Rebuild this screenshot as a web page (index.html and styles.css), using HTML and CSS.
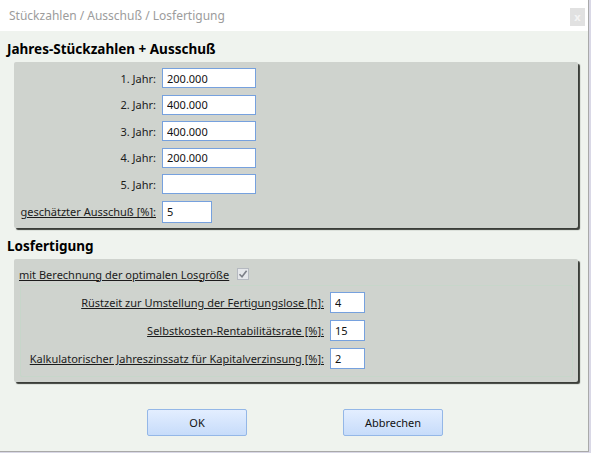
FILE: index.html
```html
<!DOCTYPE html>
<html lang="de">
<head>
    <meta charset="UTF-8">
    <title>Stückzahlen / Ausschuß / Losfertigung</title>
    <link rel="stylesheet" href="styles.css">
</head>
<body>
<div class="dialog">
    <div class="titlebar">
        <span class="title">Stückzahlen / Ausschuß / Losfertigung</span>
        <span class="close">x</span>
    </div>
    <div class="content">
        <h2 class="section-head">Jahres-Stückzahlen + Ausschuß</h2>
        <div class="panel panel-years">
            <div class="form-grid years-grid">
                <label>1. Jahr:</label><input class="field" value="200.000">
                <label>2. Jahr:</label><input class="field" value="400.000">
                <label>3. Jahr:</label><input class="field" value="400.000">
                <label>4. Jahr:</label><input class="field" value="200.000">
                <label>5. Jahr:</label><input class="field" value="">
                <label class="ul">geschätzter Ausschuß [%]:</label><input class="field field-short" value="5">
            </div>
        </div>

        <h2 class="section-head">Losfertigung</h2>
        <div class="panel panel-lot">
            <div class="check-row">
                <span class="ul">mit Berechnung der optimalen Losgröße</span>
                <span class="checkbox">
                    <svg width="10" height="10" viewBox="0 0 10 10"><path d="M1.5 5.2 L4 7.7 L8.6 1.8" fill="none" stroke="#7d8088" stroke-width="1.6"/></svg>
                </span>
            </div>
            <div class="subpanel">
                <div class="form-grid lot-grid">
                    <label class="ul">Rüstzeit zur Umstellung der Fertigungslose [h]:</label><input class="field field-tiny" value="4">
                    <label class="ul">Selbstkosten-Rentabilitätsrate [%]:</label><input class="field field-tiny" value="15">
                    <label class="ul">Kalkulatorischer Jahreszinssatz für Kapitalverzinsung [%]:</label><input class="field field-tiny" value="2">
                </div>
            </div>
        </div>

        <div class="buttons">
            <button class="btn">OK</button>
            <button class="btn">Abbrechen</button>
        </div>
    </div>
</div>
</body>
</html>
```

FILE: styles.css
```css
*{margin: 0px;padding: 0px;box-sizing: border-box;}
body{
    background: #d9d8e6;
    font-family: "Noto Sans", "Open Sans", sans-serif;
    font-size: 11px;
    color: #1b1b1b;
}
.dialog{
    width: 589px;
    height: 452px;
    background: #eff3ee;
    border-right: 1px solid #a9a9a9;
    border-bottom: 1px solid #a9a9a9;
}
.titlebar{
    height: 31px;
    background: #fff;
    display: flex;
    align-items: flex-start;
    justify-content: space-between;
}
.title{
    color: #9c9c9c;
    font-size: 12px;
    margin: 7px 0 0 9px;
}
.close{
    width: 15px;
    height: 18px;
    margin: 8px 3px 0 0;
    background: #e1e1e1;
    color: #f4f4f4;
    font-size: 11px;
    font-weight: bold;
    text-align: center;
    line-height: 17px;
}
.content{
    padding: 0 10px 0 7px;
}
.section-head{
    font-size: 13.5px;
    font-weight: bold;
    color: #000;
    height: 23px;
    line-height: 20px;
    margin-top: 8px;
}
.panel{
    margin-left: 7px;
    width: 564px;
    background: #cfd3ce;
    border-radius: 2px;
    box-shadow: 2px 2px 1px #3a3d38;
}
.panel-years{
    height: 166px;
    padding: 6px 0 0 5px;
    margin-bottom: 8px;
}
.form-grid{
    display: grid;
    align-items: center;
    column-gap: 6px;
}
.years-grid{
    grid-template-columns: 137px 94px;
    row-gap: 6.6px;
}
.form-grid label{
    text-align: right;
    white-space: nowrap;
}
.ul{
    text-decoration: underline;
}
.field{
    height: 20px;
    border: 1px solid #76a1de;
    background: #fff;
    font-family: inherit;
    font-size: 11px;
    color: #111;
    padding: 0 4px;
    outline: none;
}
.field-short{
    width: 50px;
    height: 22px;
}
.panel-lot{
    height: 123px;
    padding: 5px 5px 0 5px;
}
.check-row{
    display: flex;
    align-items: center;
    height: 20px;
}
.checkbox{
    width: 12px;
    height: 12px;
    margin-left: 8px;
    border: 1px solid #b5b9c0;
    background: #e6e8eb;
    display: flex;
    align-items: center;
    justify-content: center;
}
.subpanel{
    margin: 1px 0 0 1px;
    width: 553px;
    height: 92px;
    border: 1px solid #c7d6ca;
    border-radius: 2px;
    padding-top: 6px;
}
.lot-grid{
    grid-template-columns: 303px 35px;
    row-gap: 7px;
}
.field-tiny{
    height: 21px;
}
.buttons{
    display: flex;
    gap: 96px;
    margin: 27px 0 0 140px;
}
.btn{
    width: 100px;
    height: 27px;
    border: 1px solid #94b7e7;
    border-radius: 2px;
    background: linear-gradient(#e3eeff, #c7dcfa);
    font-family: inherit;
    font-size: 11px;
    color: #111;
}
```
